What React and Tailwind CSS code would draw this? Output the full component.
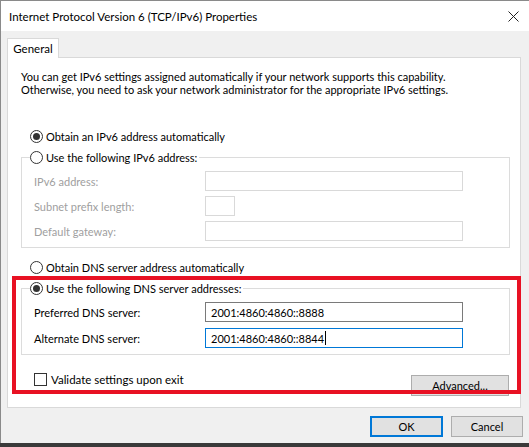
import React from "react";

const font = { fontFamily: 'Lato, "Segoe UI", sans-serif' };

function Radio({ checked, label, disabled }) {
  return (
    <div className="flex h-[16px] items-center">
      <span className="flex h-[13px] w-[13px] items-center justify-center rounded-full border border-[#333333] bg-white">
        {checked && <span className="h-[7px] w-[7px] rounded-full bg-[#333333]" />}
      </span>
      <span className={"ml-[3px] whitespace-nowrap " + (disabled ? "text-[#a0a0a0]" : "text-black")}>{label}</span>
    </div>
  );
}

function Row({ label, disabled, width = "w-[258px]", value, focused }) {
  return (
    <div className="flex h-[20px] items-center">
      <span className={"w-[171px] " + (disabled ? "text-[#a0a0a0]" : "text-black")}>{label}</span>
      <div
        className={
          "flex h-[20px] items-center border bg-white pl-[5px] " +
          width +
          " " +
          (disabled ? "border-[#d9d9d9]" : focused ? "border-[#0078d7]" : "border-[#7a7a7a]")
        }
      >
        {value && <span className="text-black">{value}</span>}
        {focused && <span className="ml-[1px] h-[14px] w-px bg-black" />}
      </div>
    </div>
  );
}

export default function App() {
  return (
    <div className="h-[447px] w-[529px] bg-[#3a3a3a] text-[11px] leading-[13px]" style={font}>
      <div className="relative flex h-[443px] w-[529px] flex-col border-l border-t border-[#8a8a8a] bg-[#f0f0f0]">
        {/* title bar */}
        <div className="flex h-[30px] shrink-0 items-center justify-between bg-white pl-[8px] pr-[9px]">
          <span className="text-[11.5px] text-black">Internet Protocol Version 6 (TCP/IPv6) Properties</span>
          <svg width="11" height="11" viewBox="0 0 11 11" className="mr-[1px]">
            <path d="M0.5 0.5 L10.5 10.5 M10.5 0.5 L0.5 10.5" stroke="#222" strokeWidth="1" fill="none" />
          </svg>
        </div>
        {/* tabs */}
        <div className="flex h-[26px] items-end pl-[6px]">
          <div className="relative z-10 -mb-px flex h-[20px] w-[52px] items-center justify-center border border-b-0 border-[#d9d9d9] bg-white">
            <span className="text-[11.5px] text-black">General</span>
          </div>
        </div>
        {/* panel */}
        <div className="ml-[6px] flex h-[351px] w-[514px] flex-col border border-[#d9d9d9] bg-white pt-[12px]">
          <p className="ml-[13px] whitespace-nowrap text-black">
            You can get IPv6 settings assigned automatically if your network supports this capability.
            <br />
            Otherwise, you need to ask your network administrator for the appropriate IPv6 settings.
          </p>
          <div className="ml-[22px] mt-[32px]">
            <Radio checked label="Obtain an IPv6 address automatically" />
          </div>
          <fieldset className="ml-[13px] mt-[5px] w-[489px] border border-[#dcdcdc] pb-[6px] pl-[12px]">
            <legend className="-ml-[4px] pr-[2px]">
              <Radio label="Use the following IPv6 address:" />
            </legend>
            <div className="mt-[6px] flex flex-col gap-[5px]">
              <Row label="IPv6 address:" disabled />
              <Row label="Subnet prefix length:" disabled width="w-[30px]" />
              <Row label="Default gateway:" disabled />
            </div>
          </fieldset>
          <div className="ml-[22px] mt-[11px]">
            <Radio label="Obtain DNS server address automatically" />
          </div>
          <fieldset className="ml-[13px] mt-[5px] w-[489px] border border-[#dcdcdc] pb-[6px] pl-[12px]">
            <legend className="-ml-[4px] pr-[2px]">
              <Radio checked label="Use the following DNS server addresses:" />
            </legend>
            <div className="mt-[6px] flex flex-col gap-[6px]">
              <Row label="Preferred DNS server:" value="2001:4860:4860::8888" />
              <Row label="Alternate DNS server:" value="2001:4860:4860::8844" focused />
            </div>
          </fieldset>
          <div className="mt-[17px] flex items-start justify-between pl-[26px] pr-[11px]">
            <div className="mt-[1px] flex items-center">
              <span className="h-[13px] w-[13px] border border-[#333333] bg-white" />
              <span className="ml-[4px] text-[11.5px] text-black">Validate settings upon exit</span>
            </div>
            <div className="mt-[3px] flex h-[21px] w-[98px] items-center justify-center border border-[#adadad] bg-[#e1e1e1] text-black">
              Advanced...
            </div>
          </div>
        </div>
        {/* buttons */}
        <div className="mt-[8px] flex justify-end gap-[8px] pr-[6px]">
          <div className="flex h-[21px] w-[73px] items-center justify-center border-2 border-[#0078d7] bg-[#e1e1e1] text-black">
            OK
          </div>
          <div className="flex h-[21px] w-[72px] items-center justify-center border border-[#adadad] bg-[#e1e1e1] text-black">
            Cancel
          </div>
        </div>
        {/* annotation */}
        <div className="pointer-events-none absolute left-[11px] top-[275px] h-[118px] w-[509px] border-4 border-[#e81123]" />
      </div>
    </div>
  );
}
